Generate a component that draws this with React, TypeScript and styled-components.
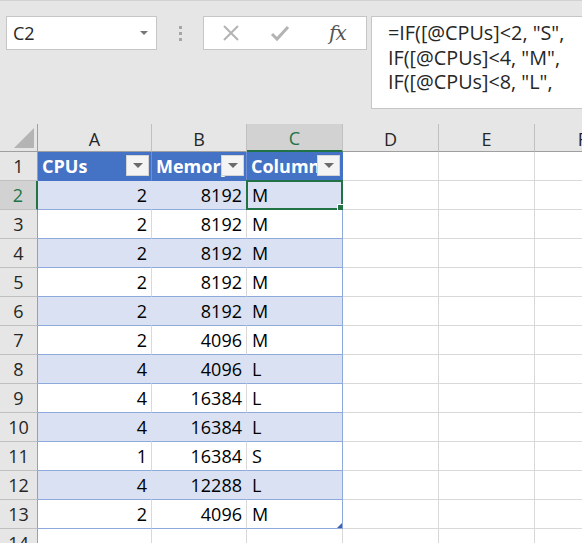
import React from 'react';
import styled, { createGlobalStyle } from 'styled-components';

const GlobalStyle = createGlobalStyle`
  html, body {
    margin: 0;
    padding: 0;
    background: #ffffff;
  }
  body {
    font-family: "Open Sans", "Noto Sans", sans-serif;
  }
`;

const Page = styled.div`
  width: 582px;
  height: 543px;
  overflow: hidden;
  display: flex;
  flex-direction: column;
`;

const TopBar = styled.div`
  height: 124px;
  box-sizing: border-box;
  background: #e6e6e6;
  border-top: 1px solid #d2d2d2;
  padding: 15px 0 0 6px;
  display: flex;
  align-items: flex-start;
  flex-shrink: 0;
  overflow: hidden;
`;

const NameBox = styled.div`
  flex-shrink: 0;
  width: 151px;
  height: 34px;
  box-sizing: border-box;
  background: #fff;
  border: 1px solid #c6c6c6;
  display: flex;
  align-items: center;
  justify-content: space-between;
  padding: 0 8px 0 6px;
  font-size: 18px;
  color: #262626;
`;

const DropArrow = styled.span`
  width: 0;
  height: 0;
  border-left: 4px solid transparent;
  border-right: 4px solid transparent;
  border-top: 4px solid #777;
`;

const Grip = styled.div`
  flex-shrink: 0;
  width: 46px;
  height: 34px;
  display: flex;
  flex-direction: column;
  align-items: center;
  justify-content: center;
  gap: 3px;
`;

const GripDot = styled.span`
  width: 3px;
  height: 3px;
  background: #a6a6a6;
`;

const FxBox = styled.div`
  flex-shrink: 0;
  width: 164px;
  height: 34px;
  box-sizing: border-box;
  background: #fff;
  border: 1px solid #c6c6c6;
  display: flex;
  align-items: center;
  padding-left: 18px;
  gap: 30px;
`;

const FxLabel = styled.span`
  font-family: "DejaVu Serif", "Liberation Serif", serif;
  font-style: italic;
  font-size: 20px;
  color: #555;
  margin-left: 9px;
  letter-spacing: -1px;
`;

const FormulaBar = styled.div`
  flex-shrink: 0;
  margin-left: 4px;
  width: 240px;
  height: 93px;
  box-sizing: border-box;
  background: #fff;
  border: 1px solid #c6c6c6;
  padding: 4px 0 0 16px;
  font-size: 19.8px;
  line-height: 24.5px;
  color: #262626;
  white-space: nowrap;
`;

const Sheet = styled.div`
  display: grid;
  grid-template-columns: 38px 114px 95px 96px 96px 96px 96px;
  grid-auto-rows: 29px;
  grid-template-rows: 28px;
  font-size: 18px;
  color: #000;
  background: #fff;
`;

const Corner = styled.div`
  background: #e6e6e6;
  border-right: 1px solid #9f9f9f;
  border-bottom: 1px solid #9f9f9f;
  box-sizing: border-box;
  display: flex;
  align-items: flex-end;
  justify-content: flex-end;
  padding: 0 3px 3px 0;
`;

const ColHead = styled.div<{ $active?: boolean }>`
  box-sizing: border-box;
  background: ${p => (p.$active ? '#d2d2d2' : '#e6e6e6')};
  color: ${p => (p.$active ? '#217346' : '#262626')};
  border-right: 1px solid #c0c0c0;
  border-bottom: ${p => (p.$active ? '2px solid #217346' : '1px solid #9f9f9f')};
  display: flex;
  align-items: center;
  justify-content: center;
  padding-top: 2px;
`;

const RowHead = styled.div<{ $active?: boolean }>`
  box-sizing: border-box;
  background: ${p => (p.$active ? '#d2d2d2' : '#e6e6e6')};
  color: ${p => (p.$active ? '#217346' : '#262626')};
  border-bottom: 1px solid #c0c0c0;
  border-right: ${p => (p.$active ? '2px solid #217346' : '1px solid #9f9f9f')};
  display: flex;
  align-items: center;
  justify-content: center;
`;

const Cell = styled.div<{ $band?: boolean; $num?: boolean; $tableEdge?: boolean; $tableRow?: boolean }>`
  position: relative;
  box-sizing: border-box;
  background: ${p => (p.$band ? '#d9e1f2' : '#fff')};
  border-right: 1px solid ${p => (p.$tableEdge ? '#8ea9db' : p.$band ? '#d9e1f2' : '#d9d9d9')};
  border-bottom: 1px solid ${p => (p.$tableRow ? '#8ea9db' : '#d9d9d9')};
  display: flex;
  align-items: center;
  justify-content: ${p => (p.$num ? 'flex-end' : 'flex-start')};
  padding: 0 4px 0 5px;
  white-space: nowrap;
  overflow: visible;
`;

const HeaderCell = styled.div<{ $edge?: boolean }>`
  position: relative;
  box-sizing: border-box;
  background: #4472c4;
  color: #fff;
  font-weight: 700;
  border-right: 1px solid ${p => (p.$edge ? '#4472c4' : '#6e8fd0')};
  border-bottom: 1px solid #4472c4;
  display: flex;
  align-items: center;
  padding: 0 0 0 4px;
  overflow: hidden;
  white-space: nowrap;
`;

const FilterButton = styled.span`
  position: absolute;
  right: 2px;
  top: 3px;
  width: 23px;
  height: 21px;
  box-sizing: border-box;
  background: #f4f4f4;
  border: 1px solid #d4d4d4;
  display: flex;
  align-items: center;
  justify-content: center;
`;

const FilterArrow = styled.span`
  width: 0;
  height: 0;
  border-left: 5px solid transparent;
  border-right: 5px solid transparent;
  border-top: 5px solid #6b6b6b;
`;

const ActiveFrame = styled.span`
  position: absolute;
  left: -1px;
  top: -1px;
  right: -1px;
  bottom: -1px;
  border: 2px solid #217346;
  pointer-events: none;
`;

const FillHandle = styled.span`
  position: absolute;
  right: -4px;
  bottom: -4px;
  width: 6px;
  height: 6px;
  background: #217346;
  border: 1px solid #fff;
`;

const ResizeHandle = styled.span`
  position: absolute;
  right: 0;
  bottom: 0;
  width: 5px;
  height: 5px;
  background: #4060b0;
  clip-path: polygon(100% 0, 100% 100%, 0 100%);
`;

const rows: Array<[number, number, string]> = [
  [2, 8192, 'M'],
  [2, 8192, 'M'],
  [2, 8192, 'M'],
  [2, 8192, 'M'],
  [2, 8192, 'M'],
  [2, 4096, 'M'],
  [4, 4096, 'L'],
  [4, 16384, 'L'],
  [4, 16384, 'L'],
  [1, 16384, 'S'],
  [4, 12288, 'L'],
  [2, 4096, 'M'],
];

const columns = ['A', 'B', 'C', 'D', 'E', 'F'];

const Filter = () => (
  <FilterButton>
    <FilterArrow />
  </FilterButton>
);

const App: React.FC = () => {
  return (
    <Page>
      <GlobalStyle />
      <TopBar>
        <NameBox>
          C2
          <DropArrow />
        </NameBox>
        <Grip>
          <GripDot />
          <GripDot />
          <GripDot />
        </Grip>
        <FxBox>
          <svg width="18" height="18" viewBox="0 0 18 18">
            <path d="M2 2 L16 16 M16 2 L2 16" stroke="#b3b3b3" strokeWidth="2" fill="none" />
          </svg>
          <svg width="20" height="18" viewBox="0 0 20 18">
            <path d="M2 10 L7 15 L18 3" stroke="#b3b3b3" strokeWidth="3" fill="none" />
          </svg>
          <FxLabel>fx</FxLabel>
        </FxBox>
        <FormulaBar>
          =IF([@CPUs]&lt;2, "S",
          <br />
          IF([@CPUs]&lt;4, "M",
          <br />
          IF([@CPUs]&lt;8, "L",
        </FormulaBar>
      </TopBar>

      <Sheet>
        <Corner>
          <svg width="20" height="20" viewBox="0 0 20 20">
            <path d="M20 0 L20 20 L0 20 Z" fill="#b4b4b4" />
          </svg>
        </Corner>
        {columns.map(c => (
          <ColHead key={c} $active={c === 'C'}>
            {c}
          </ColHead>
        ))}

        <RowHead>1</RowHead>
        <HeaderCell>
          CPUs
          <Filter />
        </HeaderCell>
        <HeaderCell>
          Memory
          <Filter />
        </HeaderCell>
        <HeaderCell $edge>
          Column1
          <Filter />
        </HeaderCell>
        <Cell />
        <Cell />
        <Cell />

        {rows.map(([cpus, mem, size], i) => {
          const n = i + 2;
          const band = n % 2 === 0;
          const last = i === rows.length - 1;
          return (
            <React.Fragment key={n}>
              <RowHead $active={n === 2}>{n}</RowHead>
              <Cell $band={band} $num $tableRow>
                {cpus}
              </Cell>
              <Cell $band={band} $num $tableRow>
                {mem}
              </Cell>
              <Cell $band={band} $tableRow $tableEdge>
                {size}
                {n === 2 && (
                  <ActiveFrame>
                    <FillHandle />
                  </ActiveFrame>
                )}
                {last && <ResizeHandle />}
              </Cell>
              <Cell />
              <Cell />
              <Cell />
            </React.Fragment>
          );
        })}

        <RowHead>14</RowHead>
        <Cell />
        <Cell />
        <Cell />
        <Cell />
        <Cell />
        <Cell />
      </Sheet>
    </Page>
  );
};

export default App;
